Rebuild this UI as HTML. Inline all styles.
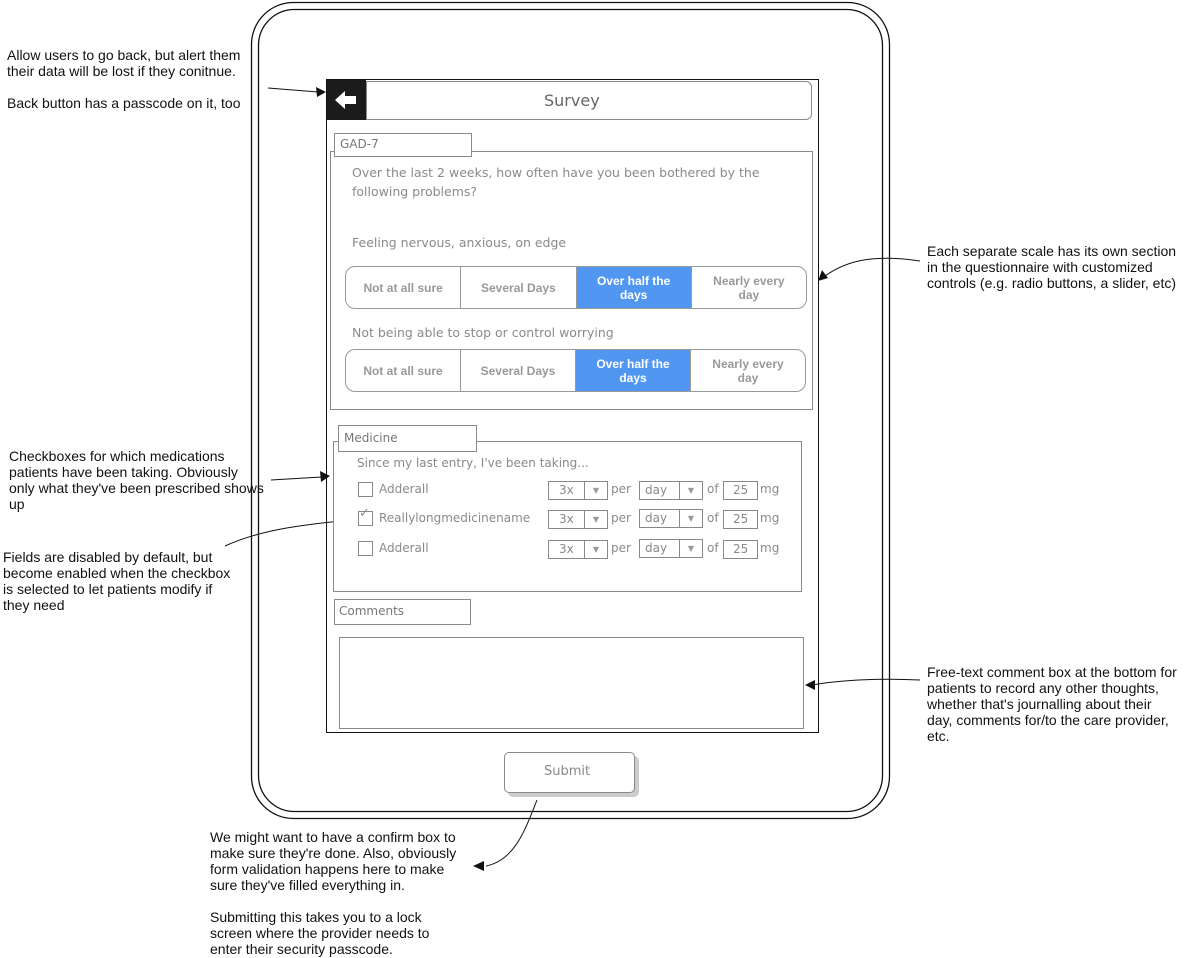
<!DOCTYPE html>
<html><head><meta charset="utf-8"><style>
*{margin:0;padding:0;box-sizing:border-box}
body{width:1189px;height:958px;background:#fff;position:relative;overflow:hidden;font-family:"Liberation Sans",Arial,sans-serif}
.a{position:absolute;font-size:14px;line-height:16px;color:#111;white-space:nowrap}
.abs{position:absolute}
.sk{position:absolute;font-family:"DejaVu Sans",sans-serif;color:#8a8a8a;font-size:12px;white-space:nowrap}
.bx{position:absolute;border:1px solid #8a8a8a;background:#fff}
.seg{position:absolute;border:1px solid #999;border-radius:10px;overflow:hidden;display:flex;background:#fff}
.seg div{flex:1;display:flex;align-items:center;justify-content:center;text-align:center;font-weight:bold;font-size:12px;color:#999;line-height:14px;border-left:1px solid #999}
.seg div:first-child{border-left:none}
.seg div.on{background:#5197f1;color:#fff}
.cb{position:absolute;width:15px;height:15px;border:1px solid #888;background:#fff}
.dd{position:absolute;height:19px;border:1px solid #888;font-family:"DejaVu Sans",sans-serif;font-size:12px;color:#888;line-height:17px;background:#fff}
.dd span{position:absolute;right:0;top:0;bottom:0;border-left:1px solid #888;width:23px;text-align:center;font-size:8px;color:#999}
</style></head><body>

<svg class="abs" style="left:0;top:0" width="1189" height="958">
<rect x="251.5" y="2.5" width="638" height="816" rx="42" fill="none" stroke="#111" stroke-width="1.3"/>
<rect x="258.5" y="9.5" width="624" height="802" rx="36" fill="none" stroke="#111" stroke-width="1.3"/>
<rect x="326.5" y="79.5" width="492" height="653" fill="#fff" stroke="#111"/>
<g fill="none" stroke="#111" stroke-width="1">
<path d="M268 88 L318 92"/>
<path d="M920 261 C880 255 850 258 825 276"/>
<path d="M271 480 L322 477"/>
<path d="M225 546 C260 530 300 525 350 520"/>
<path d="M920 680 C880 678 840 680 812 685"/>
<path d="M537 800 C525 830 515 860 486 866"/>
</g>
<g fill="#111">
<path d="M326 92 L316 87 L317 97 Z"/>
<path d="M818 281 L822 270 L828 278 Z"/>
<path d="M330 476 L320 471 L321 482 Z"/>
<path d="M358 519 L348 514 L349 525 Z"/>
<path d="M805 685 L815 680 L815 690 Z"/>
<path d="M473 866 L484 861 L484 871 Z"/>
</g>
</svg>

<div class="a" style="left:7px;top:47px">Allow users to go back, but alert them<br>their data will be lost if they conitnue.<br><br>Back button has a passcode on it, too</div>
<div class="a" style="left:927px;top:243px">Each separate scale has its own section<br>in the questionnaire with customized<br>controls (e.g. radio buttons, a slider, etc)</div>
<div class="a" style="left:9px;top:448px">Checkboxes for which medications<br>patients have been taking. Obviously<br>only what they've been prescribed shows<br>up</div>
<div class="a" style="left:3px;top:549px">Fields are disabled by default, but<br>become enabled when the checkbox<br>is selected to let patients modify if<br>they need</div>
<div class="a" style="left:927px;top:664px">Free-text comment box at the bottom for<br>patients to record any other thoughts,<br>whether that's journalling about their<br>day, comments for/to the care provider,<br>etc.</div>
<div class="a" style="left:210px;top:829px">We might want to have a confirm box to<br>make sure they're done. Also, obviously<br>form validation happens here to make<br>sure they've filled everything in.<br><br>Submitting this takes you to a lock<br>screen where the provider needs to<br>enter their security passcode.</div>

<div class="abs" style="left:327px;top:80px;width:39px;height:40px;background:#1c1c1c"></div>
<svg class="abs" style="left:333px;top:88px" width="26" height="24"><path d="M2 12 L12 3 L12 8 L23 8 L23 16 L12 16 L12 21 Z" fill="#fff"/></svg>
<div class="bx" style="left:366px;top:81px;width:446px;height:39px;border-radius:0 6px 6px 0"></div>
<div class="sk" style="left:544px;top:91px;font-size:16px;color:#666">Survey</div>

<div class="bx" style="left:330px;top:151px;width:483px;height:259px"></div>
<div class="bx" style="left:334px;top:133px;width:138px;height:24px"></div>
<div class="sk" style="left:340px;top:137px;color:#777">GAD-7</div>
<div class="sk" style="left:352px;top:163px;font-size:12.5px;line-height:19px">Over the last 2 weeks, how often have you been bothered by the<br>following problems?</div>
<div class="sk" style="left:352px;top:235px;font-size:12.5px">Feeling nervous, anxious, on edge</div>
<div class="seg" style="left:345px;top:266px;width:462px;height:43px"><div>Not at all sure</div><div>Several Days</div><div class="on">Over half the<br>days</div><div>Nearly every<br>day</div></div>
<div class="sk" style="left:352px;top:325px;font-size:12.5px">Not being able to stop or control worrying</div>
<div class="seg" style="left:345px;top:349px;width:461px;height:43px"><div>Not at all sure</div><div>Several Days</div><div class="on">Over half the<br>days</div><div>Nearly every<br>day</div></div>

<div class="bx" style="left:333px;top:441px;width:469px;height:151px"></div>
<div class="bx" style="left:338px;top:425px;width:139px;height:27px"></div>
<div class="sk" style="left:344px;top:431px;color:#777">Medicine</div>
<div class="sk" style="left:357px;top:456px">Since my last entry, I've been taking...</div>

<div class="cb" style="left:358px;top:482px"></div>
<div class="sk" style="left:379px;top:482px">Adderall</div>
<div class="cb" style="left:358px;top:511px"></div><div class="sk" style="left:359px;top:506px;font-size:13px">✓</div>
<div class="sk" style="left:379px;top:511px">Reallylongmedicinename</div>
<div class="cb" style="left:358px;top:541px"></div>
<div class="sk" style="left:379px;top:541px">Adderall</div>

<div class="dd" style="left:548px;top:481px;width:60px;padding-left:10px">3x<span>▼</span></div>
<div class="sk" style="left:611px;top:482px">per</div>
<div class="dd" style="left:639px;top:481px;width:64px;padding-left:5px">day<span>▼</span></div>
<div class="sk" style="left:707px;top:482px">of</div>
<div class="dd" style="left:723px;top:481px;width:35px;padding-left:9px">25</div>
<div class="sk" style="left:760px;top:482px">mg</div>

<div class="dd" style="left:548px;top:510px;width:60px;padding-left:10px">3x<span>▼</span></div>
<div class="sk" style="left:611px;top:511px">per</div>
<div class="dd" style="left:639px;top:509px;width:64px;padding-left:5px">day<span>▼</span></div>
<div class="sk" style="left:707px;top:511px">of</div>
<div class="dd" style="left:723px;top:510px;width:35px;padding-left:9px">25</div>
<div class="sk" style="left:760px;top:511px">mg</div>

<div class="dd" style="left:548px;top:540px;width:60px;padding-left:10px">3x<span>▼</span></div>
<div class="sk" style="left:611px;top:541px">per</div>
<div class="dd" style="left:639px;top:539px;width:64px;padding-left:5px">day<span>▼</span></div>
<div class="sk" style="left:707px;top:541px">of</div>
<div class="dd" style="left:723px;top:540px;width:35px;padding-left:9px">25</div>
<div class="sk" style="left:760px;top:541px">mg</div>

<div class="bx" style="left:334px;top:599px;width:137px;height:26px"></div>
<div class="sk" style="left:339px;top:604px;color:#777">Comments</div>
<div class="bx" style="left:339px;top:637px;width:465px;height:92px"></div>

<div class="bx" style="left:504px;top:752px;width:131px;height:41px;border-radius:5px;box-shadow:4px 4px 0 #ccc"></div>
<div class="sk" style="left:544px;top:764px;font-size:13px;color:#888">Submit</div>
</body></html>
